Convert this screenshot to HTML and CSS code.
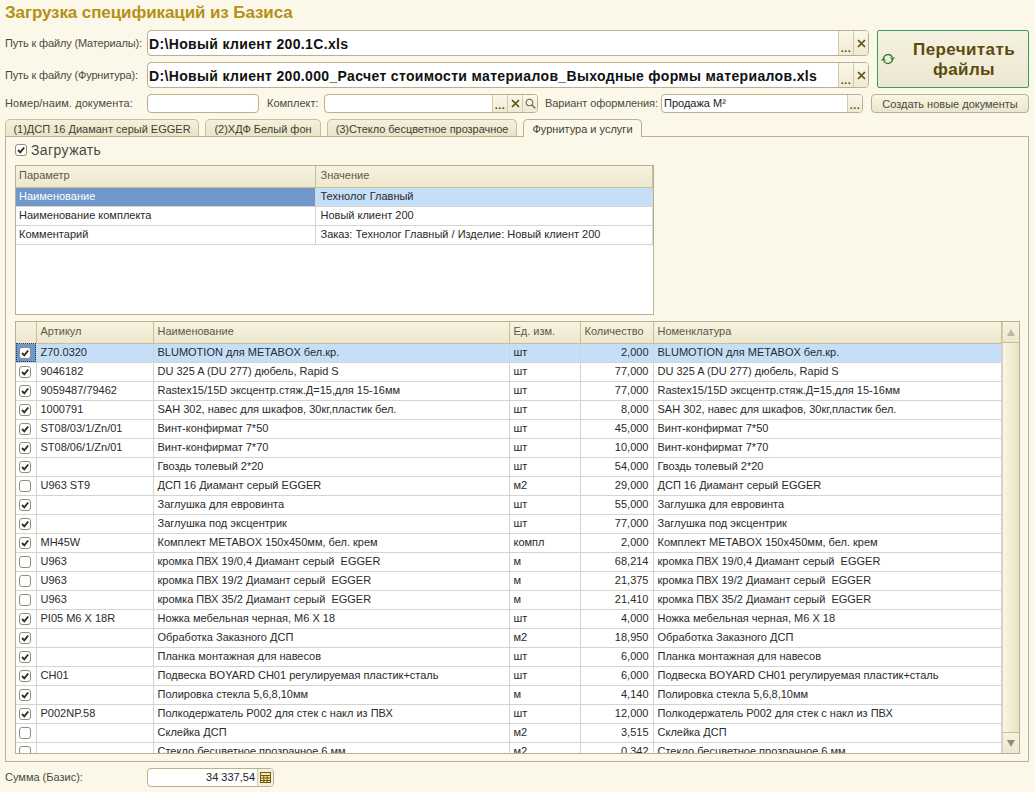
FILE: index.html
```html
<!DOCTYPE html>
<html lang="ru">
<head>
<meta charset="utf-8">
<title>Загрузка спецификаций из Базиса</title>
<link rel="stylesheet" href="styles.css">
</head>
<body>
<svg class="defs" width="0" height="0" aria-hidden="true">
  <symbol id="tick" viewBox="0 0 10 10"><path d="M2 5 4.300 7.300 8.200 2.500" fill="none" stroke="#2e2e28" stroke-width="1.900"/></symbol>
  <symbol id="cross" viewBox="0 0 9 9"><path d="M1 1 8 8M8 1 1 8" fill="none" stroke="#5f4e12" stroke-width="1.700"/></symbol>
</svg>
<h1 class="title">Загрузка спецификаций из Базиса</h1>
<div class="top">
  <div class="paths">
    <div class="path-row">
      <span class="label path-label">Путь к файлу (Материалы):</span>
      <div class="field big"><span class="value">D:\Новый клиент 200.1С.xls</span><span class="fbtn dots">...</span><span class="fbtn"><svg class="x"><use href="#cross"/></svg></span></div>
    </div>
    <div class="path-row">
      <span class="label path-label">Путь к файлу (Фурнитура):</span>
      <div class="field big"><span class="value">D:\Новый клиент 200.000_Расчет стоимости материалов_Выходные формы материалов.xls</span><span class="fbtn dots">...</span><span class="fbtn"><svg class="x"><use href="#cross"/></svg></span></div>
    </div>
  </div>
  <button class="reread" type="button">
    <svg class="sync" viewBox="0 0 14 14"><path d="M2.500 6.500a4.700 4.700 0 0 1 8.800-1.500M11.500 7.500a4.700 4.700 0 0 1-8.800 1.500" fill="none" stroke="#2c7d36" stroke-width="1.300"/><path d="M9 5.500h5l-2.500 3zM0 8.500h5l-2.500-3z" fill="#2c7d36"/></svg>
    <span class="reread-text">Перечитать<br>файлы</span>
  </button>
</div>
<div class="row3">
  <span class="label doc-label">Номер/наим. документа:</span>
  <div class="field small doc"></div>
  <span class="label kit-label">Комплект:</span>
  <div class="field small kit"><span class="value"></span><span class="fbtn dots">...</span><span class="fbtn"><svg class="x"><use href="#cross"/></svg></span><span class="fbtn"><svg class="glass" viewBox="0 0 11 11"><circle cx="4.500" cy="4.500" r="3.300" fill="none" stroke="#6a6a58" stroke-width="1.100"/><path d="M7 7l3.200 3.200" stroke="#6a6a58" stroke-width="1.500"/></svg></span></div>
  <span class="label var-label">Вариант оформления:</span>
  <div class="field small var"><span class="value">Продажа М²</span><span class="fbtn dots">...</span></div>
  <button class="create" type="button">Создать новые документы</button>
</div>
<div class="tabs">
  <span class="tab t1">(1)ДСП 16 Диамант серый EGGER</span>
  <span class="tab t2">(2)ХДФ Белый фон</span>
  <span class="tab t3">(3)Стекло бесцветное прозрачное</span>
  <span class="tab t4 active">Фурнитура и услуги</span>
</div>
<div class="panel">
  <label class="load"><span class="cb"><svg class="tick"><use href="#tick"/></svg></span>Загружать</label>
  <div class="params">
    <table>
      <colgroup><col class="p1"><col></colgroup>
      <thead><tr><th>Параметр</th><th>Значение</th></tr></thead>
      <tbody>
        <tr class="sel"><td class="cur">Наименование</td><td>Технолог Главный</td></tr>
        <tr><td>Наименование комплекта</td><td>Новый клиент 200</td></tr>
        <tr><td>Комментарий</td><td>Заказ: Технолог Главный / Изделие: Новый клиент 200</td></tr>
      </tbody>
    </table>
  </div>
  <div class="items">
    <div class="items-scroll">
      <table>
        <colgroup><col class="c0"><col class="c1"><col class="c2"><col class="c3"><col class="c4"><col></colgroup>
        <thead><tr><th></th><th>Артикул</th><th>Наименование</th><th>Ед. изм.</th><th>Количество</th><th>Номенклатура</th></tr></thead>
        <tbody>
          <tr class="sel"><td class="ck focus"><span class="cb"><svg class="tick"><use href="#tick"/></svg></span></td><td>Z70.0320</td><td>BLUMOTION для METABOX бел.кр.</td><td>шт</td><td class="num">2,000</td><td>BLUMOTION для METABOX бел.кр.</td></tr>
          <tr><td class="ck"><span class="cb"><svg class="tick"><use href="#tick"/></svg></span></td><td>9046182</td><td>DU 325 A (DU 277) дюбель, Rapid S</td><td>шт</td><td class="num">77,000</td><td>DU 325 A (DU 277) дюбель, Rapid S</td></tr>
          <tr><td class="ck"><span class="cb"><svg class="tick"><use href="#tick"/></svg></span></td><td>9059487/79462</td><td>Rastex15/15D эксцентр.стяж.Д=15,для 15-16мм</td><td>шт</td><td class="num">77,000</td><td>Rastex15/15D эксцентр.стяж.Д=15,для 15-16мм</td></tr>
          <tr><td class="ck"><span class="cb"><svg class="tick"><use href="#tick"/></svg></span></td><td>1000791</td><td>SAH 302, навес для шкафов, 30кг,пластик бел.</td><td>шт</td><td class="num">8,000</td><td>SAH 302, навес для шкафов, 30кг,пластик бел.</td></tr>
          <tr><td class="ck"><span class="cb"><svg class="tick"><use href="#tick"/></svg></span></td><td>ST08/03/1/Zn/01</td><td>Винт-конфирмат 7*50</td><td>шт</td><td class="num">45,000</td><td>Винт-конфирмат 7*50</td></tr>
          <tr><td class="ck"><span class="cb"><svg class="tick"><use href="#tick"/></svg></span></td><td>ST08/06/1/Zn/01</td><td>Винт-конфирмат 7*70</td><td>шт</td><td class="num">10,000</td><td>Винт-конфирмат 7*70</td></tr>
          <tr><td class="ck"><span class="cb"><svg class="tick"><use href="#tick"/></svg></span></td><td></td><td>Гвоздь толевый 2*20</td><td>шт</td><td class="num">54,000</td><td>Гвоздь толевый 2*20</td></tr>
          <tr><td class="ck"><span class="cb"></span></td><td>U963 ST9</td><td>ДСП 16 Диамант серый EGGER</td><td>м2</td><td class="num">29,000</td><td>ДСП 16 Диамант серый EGGER</td></tr>
          <tr><td class="ck"><span class="cb"><svg class="tick"><use href="#tick"/></svg></span></td><td></td><td>Заглушка для евровинта</td><td>шт</td><td class="num">55,000</td><td>Заглушка для евровинта</td></tr>
          <tr><td class="ck"><span class="cb"><svg class="tick"><use href="#tick"/></svg></span></td><td></td><td>Заглушка под эксцентрик</td><td>шт</td><td class="num">77,000</td><td>Заглушка под эксцентрик</td></tr>
          <tr><td class="ck"><span class="cb"><svg class="tick"><use href="#tick"/></svg></span></td><td>MH45W</td><td>Комплект METABOX 150х450мм, бел. крем</td><td>компл</td><td class="num">2,000</td><td>Комплект METABOX 150х450мм, бел. крем</td></tr>
          <tr><td class="ck"><span class="cb"></span></td><td>U963</td><td>кромка ПВХ 19/0,4 Диамант серый  EGGER</td><td>м</td><td class="num">68,214</td><td>кромка ПВХ 19/0,4 Диамант серый  EGGER</td></tr>
          <tr><td class="ck"><span class="cb"></span></td><td>U963</td><td>кромка ПВХ 19/2 Диамант серый  EGGER</td><td>м</td><td class="num">21,375</td><td>кромка ПВХ 19/2 Диамант серый  EGGER</td></tr>
          <tr><td class="ck"><span class="cb"></span></td><td>U963</td><td>кромка ПВХ 35/2 Диамант серый  EGGER</td><td>м</td><td class="num">21,410</td><td>кромка ПВХ 35/2 Диамант серый  EGGER</td></tr>
          <tr><td class="ck"><span class="cb"><svg class="tick"><use href="#tick"/></svg></span></td><td>PI05 M6 X 18R</td><td>Ножка мебельная черная, М6 X 18</td><td>шт</td><td class="num">4,000</td><td>Ножка мебельная черная, М6 X 18</td></tr>
          <tr><td class="ck"><span class="cb"><svg class="tick"><use href="#tick"/></svg></span></td><td></td><td>Обработка Заказного ДСП</td><td>м2</td><td class="num">18,950</td><td>Обработка Заказного ДСП</td></tr>
          <tr><td class="ck"><span class="cb"><svg class="tick"><use href="#tick"/></svg></span></td><td></td><td>Планка монтажная для навесов</td><td>шт</td><td class="num">6,000</td><td>Планка монтажная для навесов</td></tr>
          <tr><td class="ck"><span class="cb"><svg class="tick"><use href="#tick"/></svg></span></td><td>CH01</td><td>Подвеска BOYARD CH01 регулируемая пластик+сталь</td><td>шт</td><td class="num">6,000</td><td>Подвеска BOYARD CH01 регулируемая пластик+сталь</td></tr>
          <tr><td class="ck"><span class="cb"><svg class="tick"><use href="#tick"/></svg></span></td><td></td><td>Полировка стекла 5,6,8,10мм</td><td>м</td><td class="num">4,140</td><td>Полировка стекла 5,6,8,10мм</td></tr>
          <tr><td class="ck"><span class="cb"><svg class="tick"><use href="#tick"/></svg></span></td><td>P002NP.58</td><td>Полкодержатель Р002 для стек с накл из ПВХ</td><td>шт</td><td class="num">12,000</td><td>Полкодержатель Р002 для стек с накл из ПВХ</td></tr>
          <tr><td class="ck"><span class="cb"></span></td><td></td><td>Склейка ДСП</td><td>м2</td><td class="num">3,515</td><td>Склейка ДСП</td></tr>
          <tr><td class="ck"><span class="cb"></span></td><td></td><td>Стекло бесцветное прозрачное 6 мм</td><td>м2</td><td class="num">0,342</td><td>Стекло бесцветное прозрачное 6 мм</td></tr>
        </tbody>
      </table>
    </div>
    <div class="scrollbar">
      <span class="sb-btn"><span class="arrow up"></span></span>
      <span class="sb-track"></span>
      <span class="sb-btn"><span class="arrow down"></span></span>
    </div>
  </div>
</div>
<div class="sum">
  <span class="label sum-label">Сумма (Базис):</span>
  <div class="field small total"><span class="value right">34 337,54</span><span class="calc"><svg viewBox="0 0 13 13"><rect x="1.500" y="1.500" width="10" height="10" fill="#f6e9a8" stroke="#6b5a14"/><path d="M1.500 4.500h10M1.500 7h10M1.500 9.500h10M4.800 4.500v7M8.200 4.500v7" stroke="#6b5a14" stroke-width="1"/></svg></span></div>
</div>
</body>
</html>
```

FILE: styles.css
```css
* { box-sizing: border-box; }
html, body { margin: 0; height: 100%; }
body {
  width: 1035px;
  height: 792px;
  overflow: hidden;
  padding: 0 6px 0 5px;
  background: #fbf8ea;
  color: #333;
  font: 11px/1.2 "Liberation Sans", Arial, sans-serif;
}
.defs { position: absolute; }
.title {
  margin: 0;
  height: 30px;
  padding-top: 3px;
  font: bold 17px/20px "Liberation Sans", Arial, sans-serif;
  letter-spacing: -.1px;
  color: #b59016;
}
.label { flex: none; padding-top: 1px; color: #4a4a3c; white-space: nowrap; font-size: 11px; }
.path-label { width: 142px; letter-spacing: -.15px; }
.doc-label { width: 142px; letter-spacing: .1px; }
.sum-label { width: 142px; }

.top { display: flex; gap: 8px; height: 58px; }
.paths { width: 864px; display: flex; flex-direction: column; gap: 6px; }
.path-row { display: flex; align-items: center; height: 26px; }

.field {
  display: flex;
  align-items: stretch;
  background: #fff;
  border: 1px solid #b8b08e;
  border-radius: 4px;
  overflow: hidden;
  flex: none;
}
.field .value {
  flex: 1;
  min-width: 0;
  padding: 1px 0 0 2px;
  white-space: nowrap;
  overflow: hidden;
  align-self: center;
}
.big { width: 722px; height: 26px; }
.big .value { padding-left: 1px; font: bold 14px/18px "Liberation Sans", Arial, sans-serif; color: #111; letter-spacing: .34px; }
.small { height: 19px; }
.small .value { font-size: 11px; color: #222; }
.field .right { text-align: right; padding-right: 2px; }

.fbtn {
  flex: none;
  width: 15px;
  display: flex;
  align-items: center;
  justify-content: center;
  background: linear-gradient(#fbf8ea, #f0ead2);
  border-left: 1px solid #cfc9ad;
  color: #5f4e12;
}
.dots { align-items: flex-end; font: bold 11px/14px "Liberation Sans", Arial, sans-serif; letter-spacing: .5px; }
.x { width: 9px; height: 9px; }
.glass { width: 11px; height: 11px; }

.reread {
  width: 152px;
  height: 58px;
  display: flex;
  align-items: center;
  padding: 0 0 0 3px;
  border: 1px solid #3d9a58;
  border-radius: 2px;
  background: linear-gradient(#f5f2e1, #ece7d0);
  color: #5c4a0e;
  font: bold 17px/20px "Liberation Sans", Arial, sans-serif;
}
.sync { width: 14px; height: 14px; flex: none; }
.reread-text { flex: 1; padding: 1px 3px 0 8px; text-align: center; letter-spacing: .4px; }

.row3 { display: flex; align-items: center; height: 19px; margin-top: 6px; }
.doc { width: 112px; }
.kit-label { margin-left: 8px; width: 57px; }
.kit { width: 214px; }
.var-label { margin-left: 7px; width: 116px; letter-spacing: -.1px; }
.var { width: 202px; }
.create {
  flex: none;
  margin-left: 8px;
  width: 158px;
  height: 19px;
  padding: 1px 0 0;
  border: 1px solid #b8b08e;
  border-radius: 4px;
  background: linear-gradient(#f9f6e6, #ebe5cd);
  color: #4a4a3c;
  font: 11px/1 "Liberation Sans", Arial, sans-serif;
}

.tabs { display: flex; gap: 6px; height: 17px; margin-top: 6px; position: relative; z-index: 1; }
.tab {
  height: 17px;
  padding-top: 3px;
  text-align: center;
  white-space: nowrap;
  border: 1px solid #c6bf9d;
  border-bottom: 0;
  border-radius: 5px 5px 0 0;
  background: linear-gradient(#f4f0dc, #e9e3c9);
  color: #3f3f32;
  font-size: 11px;
}
.t1 { width: 194px; }
.t2 { width: 116px; }
.t3 { width: 190px; letter-spacing: -.05px; }
.t4 { width: 119px; }
.active { height: 18px; background: #fbf8ea; border-color: #b8b08e; }

.panel {
  height: 626px;
  border: 1px solid #b8b08e;
  padding: 5px 7px 7px 9px;
  display: flex;
  flex-direction: column;
}
.load {
  display: flex;
  align-items: center;
  gap: 4px;
  height: 16px;
  margin-bottom: 7px;
  font-size: 14px;
  letter-spacing: .4px;
  color: #4a4a3c;
}
.cb {
  display: inline-block;
  width: 12px;
  height: 12px;
  border: 1px solid #8f8f80;
  border-radius: 3px;
  background: #fff;
  vertical-align: middle;
}
.tick { display: block; width: 10px; height: 10px; }

table { border-collapse: collapse; table-layout: fixed; width: 100%; }
th {
  height: 21px;
  padding: 0 0 2px 4px;
  text-align: left;
  font-weight: normal;
  color: #5a5a48;
  background: linear-gradient(#f7f3e1, #ede7cd);
  border-right: 1px solid #c6bf9d;
  border-bottom: 1px solid #c6bf9d;
  white-space: nowrap;
}
td {
  height: 19px;
  padding: 0 0 0 4px;
  white-space: pre;
  overflow: hidden;
  color: #2a2a2a;
  background: #fff;
  border-right: 1px solid #d4d4d0;
  border-bottom: 1px solid #d4d4d0;
}
.sel td { background: #c6dff8; }
.sel td.cur { background: #6f97c9; color: #fff; }
.sel td.focus { background: #6f97c9; outline: 1px dotted #1f3a80; outline-offset: -1px; }
td.num { text-align: right; padding: 0 4px 0 0; }
td.ck { padding: 0 0 0 3px; line-height: 0; }

.params { width: 639px; height: 150px; flex: none; background: #fff; border: 1px solid #b8b08e; }
.params th:first-child, .params td:first-child { padding-left: 3px; }
.params th + th, .params td + td { padding-left: 5px; }
.p1 { width: 299px; }

.items {
  flex: none;
  width: 1005px;
  height: 433px;
  margin-top: 6px;
  display: flex;
  border: 1px solid #b8b08e;
  background: #fff;
}
.items-scroll { flex: 1; min-width: 0; overflow: hidden; }
.c0 { width: 20px; }
.c1 { width: 117px; }
.c2 { width: 356px; }
.c3 { width: 71px; }
.c4 { width: 73px; }
.scrollbar {
  flex: none;
  width: 17px;
  display: flex;
  flex-direction: column;
  border-left: 1px solid #d4d0b8;
  background: linear-gradient(90deg, #faf6e2, #e9e2c5);
}
.sb-btn {
  flex: none;
  height: 21px;
  display: flex;
  align-items: center;
  justify-content: center;
  background: linear-gradient(#f7f3e1, #ede7cd);
  border-bottom: 1px solid #c6bf9d;
}
.sb-btn:last-child { border-bottom: 0; border-top: 1px solid #c6bf9d; }
.sb-track { flex: 1; }
.arrow { width: 0; height: 0; border-left: 4px solid transparent; border-right: 4px solid transparent; }
.up { border-bottom: 7px solid #b8b8a8; }
.down { border-top: 7px solid #8f8f80; }

.sum { display: flex; align-items: center; height: 19px; margin-top: 6px; }
.total { width: 127px; }
.calc { flex: none; width: 16px; display: flex; align-items: center; justify-content: center; background: #f4efd8; border-left: 1px solid #cfc9ad; }
.calc svg { width: 13px; height: 13px; }
```
